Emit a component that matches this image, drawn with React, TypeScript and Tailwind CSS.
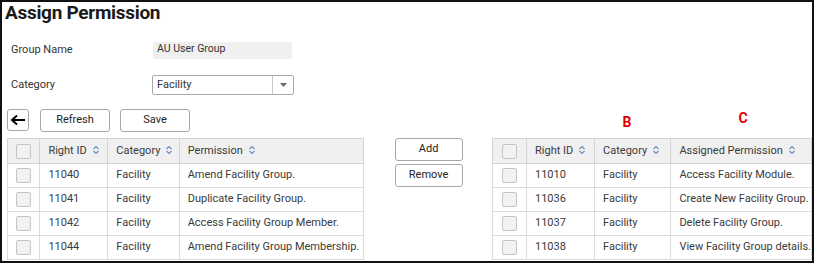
import React from 'react'

type Row = { id: string; category: string; permission: string }

const leftRows: Row[] = [
  { id: '11040', category: 'Facility', permission: 'Amend Facility Group.' },
  { id: '11041', category: 'Facility', permission: 'Duplicate Facility Group.' },
  { id: '11042', category: 'Facility', permission: 'Access Facility Group Member.' },
  { id: '11044', category: 'Facility', permission: 'Amend Facility Group Membership.' },
]

const rightRows: Row[] = [
  { id: '11010', category: 'Facility', permission: 'Access Facility Module.' },
  { id: '11036', category: 'Facility', permission: 'Create New Facility Group.' },
  { id: '11037', category: 'Facility', permission: 'Delete Facility Group.' },
  { id: '11038', category: 'Facility', permission: 'View Facility Group details.' },
]

const SortIcon = () => (
  <svg width="8" height="10" viewBox="0 0 8 10" className="inline-block ml-[5px] -mt-[2px]">
    <path d="M1.5 4 L4 1.5 L6.5 4" fill="none" stroke="#6a8fc0" strokeWidth="1.2" />
    <path d="M1.5 6 L4 8.5 L6.5 6" fill="none" stroke="#6a8fc0" strokeWidth="1.2" />
  </svg>
)

const Box = () => (
  <div className="w-[15px] h-[15px] mx-auto rounded-[2px] border border-[#c4c4c4] bg-[#f2f2f2]" />
)

const Btn = ({ label, className }: { label: string; className: string }) => (
  <button className={`h-[23px] rounded-[3px] border border-[#a8a8a8] bg-white text-[11px] text-[#222] ${className}`}>
    {label}
  </button>
)

const Grid = ({ rows, widths, lastHead }: { rows: Row[]; widths: number[]; lastHead: string }) => (
  <table className="table-fixed border-collapse text-[11px] text-[#3a3a3a]">
    <colgroup>
      {widths.map((w, i) => (
        <col key={i} style={{ width: w }} />
      ))}
    </colgroup>
    <thead>
      <tr className="h-[25px] bg-[#f0f0f0]">
        <th className="border border-[#d4d4d4]">
          <Box />
        </th>
        <th className="border border-[#d4d4d4] text-left font-normal pl-[8px]">
          Right ID<SortIcon />
        </th>
        <th className="border border-[#d4d4d4] text-left font-normal pl-[8px]">
          Category<SortIcon />
        </th>
        <th className="border border-[#d4d4d4] text-left font-normal pl-[8px]">
          {lastHead}
          <SortIcon />
        </th>
      </tr>
    </thead>
    <tbody>
      {rows.map((r) => (
        <tr key={r.id} className="h-[24px]">
          <td className="border border-[#dcdcdc]">
            <Box />
          </td>
          <td className="border border-[#dcdcdc] pl-[8px]">{r.id}</td>
          <td className="border border-[#dcdcdc] pl-[8px]">{r.category}</td>
          <td className="border border-[#dcdcdc] pl-[8px] whitespace-nowrap">{r.permission}</td>
        </tr>
      ))}
    </tbody>
  </table>
)

export default function App() {
  return (
    <div className="w-[815px] h-[265px] bg-white font-['Roboto','Liberation_Sans',sans-serif]">
      <div className="w-[814px] h-[263px] border-2 border-[#111] overflow-hidden">
        <h1 className="ml-[3px] text-[19px] leading-[22px] font-bold text-[#1a1a1a] tracking-[-0.3px]">
          Assign Permission
        </h1>

        <div className="mt-[18px] ml-[9px] flex items-center text-[11px] text-[#333]">
          <span className="w-[142px]">Group Name</span>
          <div className="w-[139px] h-[17px] bg-[#efefef] pl-[4px] text-[10.5px] leading-[13px]">AU User Group</div>
        </div>

        <div className="mt-[16px] ml-[9px] flex items-center text-[11px] text-[#333]">
          <span className="w-[141px]">Category</span>
          <div className="w-[142px] h-[20px] flex border border-[#a9a9a9] rounded-[2px] bg-white">
            <span className="flex-1 pl-[4px] leading-[18px]">Facility</span>
            <span className="w-[21px] border-l border-[#c8c8c8] flex items-center justify-center">
              <svg width="7" height="4" viewBox="0 0 7 4">
                <path d="M0 0 L7 0 L3.5 4 Z" fill="#666" />
              </svg>
            </span>
          </div>
        </div>

        <div className="flex mt-[13px] ml-[5px]">
          <div className="flex flex-col">
            <div className="flex items-center h-[24px]">
              <button className="w-[22px] h-[22px] rounded-[3px] border border-[#a8a8a8] bg-white flex items-center justify-center">
                <svg width="16" height="12" viewBox="0 0 16 12">
                  <path d="M15 6 H2.5" stroke="#000" strokeWidth="2" />
                  <path d="M7 1.5 L2 6 L7 10.5" fill="none" stroke="#000" strokeWidth="2" />
                </svg>
              </button>
              <Btn label="Refresh" className="w-[70px] ml-[11px]" />
              <Btn label="Save" className="w-[70px] ml-[10px]" />
            </div>
            <div className="mt-[6px]">
              <Grid rows={leftRows} widths={[33, 69, 72, 184]} lastHead="Permission" />
            </div>
          </div>

          <div className="flex flex-col gap-[3px] ml-[31px] mt-[30px]">
            <Btn label="Add" className="w-[68px]" />
            <Btn label="Remove" className="w-[68px]" />
          </div>

          <div className="flex flex-col ml-[29px]">
            <div className="relative h-[30px] w-[318px]">
              <span className="absolute left-[131px] top-[4px] text-[14px] font-bold text-[#e00000]">B</span>
              <span className="absolute left-[247px] top-[0px] text-[14px] font-bold text-[#e00000]">C</span>
            </div>
            <Grid rows={rightRows} widths={[35, 69, 77, 137]} lastHead="Assigned Permission" />
          </div>
        </div>
      </div>
    </div>
  )
}
